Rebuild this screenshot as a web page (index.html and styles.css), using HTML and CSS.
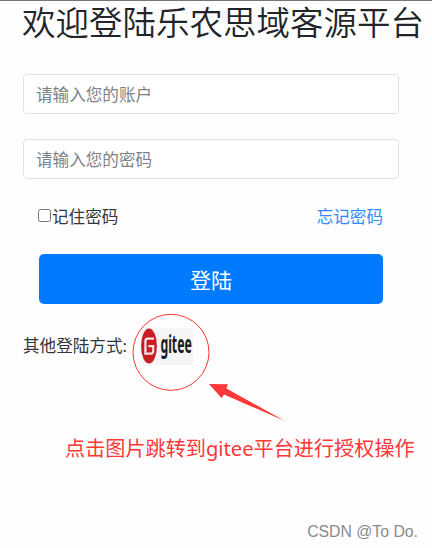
FILE: index.html
```html
<!DOCTYPE html>
<html lang="zh-CN">
<head>
    <meta charset="UTF-8">
    <meta name="viewport" content="width=device-width, initial-scale=1.0">
    <title>登陆</title>
    <link rel="stylesheet" href="styles.css">
</head>
<body>
    <div class="container">
        <h1>欢迎登陆乐农思域客源平台</h1>

        <form class="login-form">
            <input class="form-control" type="text" placeholder="请输入您的账户">
            <input class="form-control" type="password" placeholder="请输入您的密码">

            <div class="options">
                <label class="remember-me"><input type="checkbox"><span>记住密码</span></label>
                <a class="forgot" href="#">忘记密码</a>
            </div>

            <button class="btn" type="button">登陆</button>
        </form>

        <div class="other-login">
            <span>其他登陆方式:</span>
            <a class="gitee" href="#">
                <svg class="gitee-logo" width="52" height="37" viewBox="0 0 52 37">
                    <rect width="52" height="37" fill="#f5f5f5"/>
                    <ellipse cx="8" cy="18" rx="7.9" ry="17.6" fill="#c71d23"/>
                    <path d="M13 10.6H6.6Q4.4 10.6 4.4 13.5V25.6H10Q12.2 25.6 12.2 22.8V18.2H7.4" fill="none" stroke="#fbe6e6" stroke-width="2.2"/>
                    <text class="gitee-name" transform="translate(19.4 25) scale(.5 1)" textLength="63" lengthAdjust="spacingAndGlyphs">gitee</text>
                </svg>
            </a>
        </div>
    </div>

    <svg class="marks" width="432" height="548" viewBox="0 0 432 548">
        <circle cx="171" cy="352.3" r="38" fill="none" stroke="#f33" stroke-width="1"/>
        <path d="M209 384L228 384.2L226.5 388.5L285 421L224 394.5L221.5 398Z" fill="#fd3838"/>
    </svg>

    <p class="note">点击图片跳转到gitee平台进行授权操作</p>
    <div class="watermark">CSDN @To Do.</div>
</body>
</html>
```

FILE: styles.css
```css
* {
    box-sizing: border-box;
}
body {
    margin: 0;
    height: 548px;
    display: flex;
    flex-direction: column;
    position: relative;
    border-top: 1px solid #777;
    background-color: #fefefe;
    color: #33373b;
    font-family: "Noto Sans", "Noto Sans CJK SC", sans-serif;
    font-size: 16.6px;
    line-height: 25px;
}
.container {
    padding-left: 23px;
}
h1 {
    margin: 0 0 33px -1px;
    color: #212529;
    font-family: "Noto Sans CJK SC", sans-serif;
    font-size: 33.5px;
    font-weight: 350;
    line-height: 40px;
    white-space: nowrap;
}
.login-form {
    width: 376px;
}
.form-control {
    display: block;
    width: 100%;
    height: 40px;
    margin-bottom: 25px;
    padding: 0 12px;
    border: 1px solid #dfe3e8;
    border-radius: 4px;
    background-color: #fff;
    font: inherit;
}
.form-control::placeholder {
    color: #7b838a;
}
.options {
    display: flex;
    justify-content: space-between;
    padding: 0 16px 0 15px;
}
.remember-me {
    display: flex;
    align-items: center;
}
.remember-me input {
    width: 13px;
    height: 13px;
    margin: 0 1px 2px 0;
}
.forgot {
    color: #2a8cff;
    text-decoration: none;
}
.btn {
    display: block;
    width: 344px;
    height: 50px;
    margin: 25px 0 0 16px;
    padding: 0;
    border: none;
    border-radius: 5px;
    background-color: #007bff;
    color: #fff;
    font-family: inherit;
    font-size: 21px;
}
.other-login {
    display: flex;
    align-items: center;
    gap: 14px;
    margin-top: 24px;
}
.other-login span {
    margin-top: -2px;
}
.gitee,
.gitee-logo {
    display: block;
}
.gitee-logo {
    overflow: visible;
}
.gitee-name {
    font: bold 25px "Noto Sans", sans-serif;
    fill: #1b1b1b;
}
.marks {
    position: absolute;
    top: -1px;
    left: 0;
    pointer-events: none;
}
.note {
    margin: 68px 0 0 65px;
    color: #fd3838;
    font-size: 20.15px;
    line-height: 30px;
    white-space: nowrap;
}
.watermark {
    margin: auto 14px 5px auto;
    color: #8a8a8a;
    font-family: "Liberation Sans", sans-serif;
    font-size: 15.8px;
    line-height: 22px;
}
```
